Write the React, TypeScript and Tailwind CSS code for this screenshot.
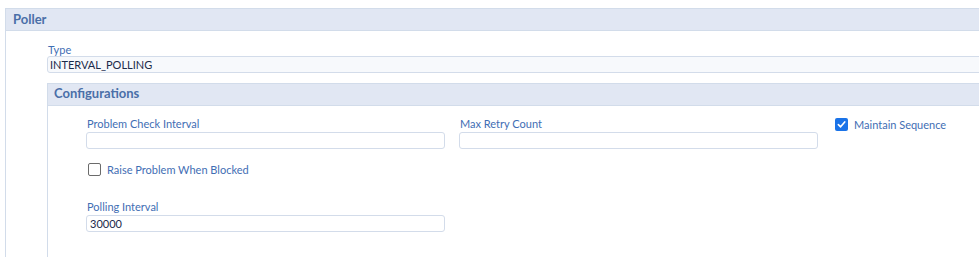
import React from 'react';

const font = { fontFamily: '"Lato", "Liberation Sans", sans-serif' };

const Field: React.FC<{ label: string; value?: string }> = ({ label, value }) => (
  <div className="flex flex-col">
    <label className="pl-[1px] text-[11px] leading-[13px] text-[#3f6eb4]">{label}</label>
    <div className="mt-[2px] h-[17px] w-[359px] rounded-[3px] border border-[#d3dcea] bg-white px-[3px] text-[11px] leading-[15px] text-[#1c2b4b]">
      {value}
    </div>
  </div>
);

const Check: React.FC<{ label: string; checked?: boolean }> = ({ label, checked }) => (
  <div className="flex h-[13px] items-center gap-[6px]">
    {checked ? (
      <span className="flex h-[13px] w-[13px] items-center justify-center rounded-[2px] bg-[#1a73e8]">
        <svg width="9" height="9" viewBox="0 0 10 10" fill="none">
          <path d="M1.5 5.2 4 7.6 8.6 2.2" stroke="white" strokeWidth="1.8" strokeLinecap="round" strokeLinejoin="round" />
        </svg>
      </span>
    ) : (
      <span className="h-[13px] w-[13px] rounded-[2px] border border-[#6b6b6b] bg-white" />
    )}
    <span className="text-[11px] leading-[13px] text-[#3f6eb4]">{label}</span>
  </div>
);

export default function App() {
  return (
    <div className="h-[257px] w-[979px] overflow-hidden bg-white pl-[5px] pt-[8px]" style={font}>
      <div className="h-full w-[1000px] border-l border-t border-[#d2dcea]">
        <div className="h-[22px] border-b border-[#d2dcea] bg-[#e1e7f3] pl-[7px] text-[13px] font-bold leading-[20px] text-[#4a6fa8]">
          Poller
        </div>
        <div className="pl-[41px] pt-[12px]">
          <div className="pl-[1px] text-[11px] leading-[13px] text-[#3f6eb4]">Type</div>
          <div className="h-[17px] w-[960px] rounded-[3px] border border-[#d3dcea] bg-[#f7f9fc] px-[2px] text-[11px] leading-[15px] text-[#1c2b4b]">
            INTERVAL_POLLING
          </div>
          <div className="mt-[10px] h-[200px] border-l border-t border-[#d2dcea]">
            <div className="h-[22px] border-b border-[#d2dcea] bg-[#e1e7f3] pl-[6px] text-[13px] font-bold leading-[19px] text-[#4a6fa8]">
              Configurations
            </div>
            <div className="pl-[38px] pt-[11px]">
              <div className="flex items-start">
                <Field label="Problem Check Interval" />
                <div className="ml-[14px]">
                  <Field label="Max Retry Count" />
                </div>
                <div className="ml-[17px] pt-[1px]">
                  <Check label="Maintain Sequence" checked />
                </div>
              </div>
              <div className="mt-[14px] pl-[2px]">
                <Check label="Raise Problem When Blocked" />
              </div>
              <div className="mt-[24px]">
                <Field label="Polling Interval" value="30000" />
              </div>
            </div>
          </div>
        </div>
      </div>
    </div>
  );
}
